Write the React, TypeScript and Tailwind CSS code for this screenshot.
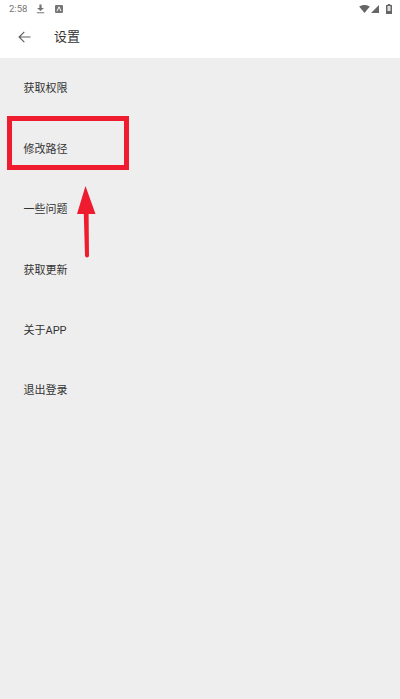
const items = ["获取权限", "修改路径", "一些问题", "获取更新", "关于APP", "退出登录"];

export default function App() {
  return (
    <div className="relative flex h-[699px] w-[400px] flex-col overflow-hidden bg-[#eeeeee] font-['Roboto','Noto_Sans_CJK_SC',sans-serif]">
      <header className="h-[58px] bg-white">
        <div className="flex h-[15px] items-center justify-between pl-[9px] pr-[8px] pt-[2px]">
          <div className="flex items-center gap-[9px] text-[#757575]">
            <span className="text-[9.5px] leading-none">2:58</span>
            <svg width="9" height="10" viewBox="0 0 9 10" fill="#757575">
              <path d="M3.4 0.5h2.2v3.6H8L4.5 7 1 4.1h2.4zM0.8 8.2h7.4v1H0.8z" />
            </svg>
            <svg width="8" height="8" viewBox="0 0 8 8" className="ml-[1px]">
              <rect width="8" height="8" rx="1" fill="#757575" />
              <path d="M2 6.2 4 1.8l2 4.4" stroke="#fff" strokeWidth="1" fill="none" />
            </svg>
          </div>
          <div className="flex items-center gap-[1px]">
            <svg width="11" height="8" viewBox="0 0 12 9" fill="#666666">
              <path d="M0 1.8C3.5-.6 8.5-.6 12 1.8L6 9z" />
            </svg>
            <svg width="8" height="8" viewBox="0 0 9 9" fill="#666666">
              <path d="M9 0v9H0z" />
            </svg>
            <svg width="6" height="10" viewBox="0 0 6 10" className="ml-[6px]">
              <path d="M1.8 0h2.4v1H6v9H0V1h1.8z" fill="#666666" />
              <rect x="1.5" y="2" width="3" height="5" fill="#e0e0e0" />
            </svg>
          </div>
        </div>
        <div className="flex h-[43px] items-center pl-[18px]">
          <svg width="13" height="12" viewBox="0 0 13 12" fill="none" stroke="#616161" strokeWidth="1.2">
            <path d="M12.5 6H1.2M6.3 .8 1.1 6l5.2 5.2" />
          </svg>
          <span className="ml-[23px] text-[13px] leading-none text-[#333333]">设置</span>
        </div>
      </header>

      <ul className="flex flex-col pt-[1.5px]">
        {items.map((item) => (
          <li key={item} className="flex h-[60.4px] items-center pl-[23.5px] text-[11px] text-[#333333]">
            {item}
          </li>
        ))}
      </ul>

      <div className="absolute left-[7px] top-[116px] h-[54px] w-[122px] border-[5px] border-[#ee1c2e]" />
      <svg className="absolute left-[70px] top-[180px]" width="34" height="82" viewBox="0 0 34 82" fill="#ee1c2e">
        <path d="M15.5 6 7 34h6.8L15 75.5a2 2 0 0 0 4 0L18.6 34H25.5z" />
      </svg>
    </div>
  );
}
